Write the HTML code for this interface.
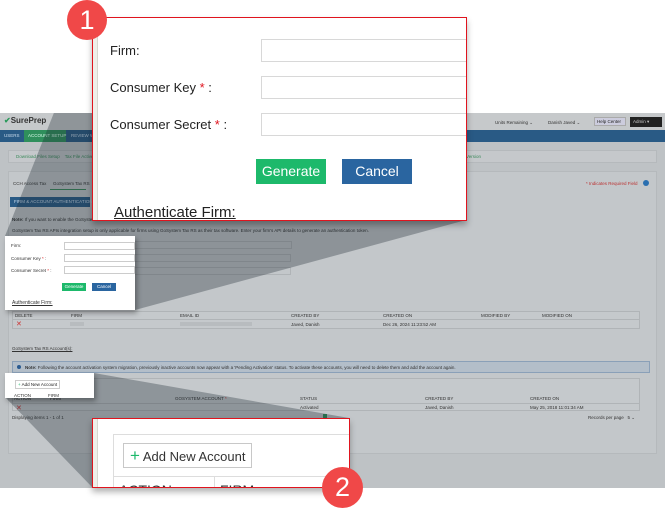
<!DOCTYPE html>
<html><head><meta charset="utf-8"><style>
*{margin:0;padding:0;box-sizing:border-box}
body{width:665px;height:509px;background:#fff;position:relative;overflow:hidden;font-family:"Liberation Sans",sans-serif;color:#222}
.a{position:absolute}
.t{position:absolute;font-size:4.5px;color:#333;white-space:nowrap}
.app{position:absolute;left:0;top:113px;width:665px;height:375px;background:#bec2c5;overflow:hidden}
.in{background:#fff;border:1px solid #ccc;position:absolute}
</style></head><body>
<div class="app">
 <div class="a" style="left:0;top:0;width:665px;height:17px;background:#c6c9cb"></div>
 <div class="a" style="left:4px;top:3px;font-size:8px;font-weight:bold;color:#333"><span style="color:#2a9a5a">✔</span>SurePrep</div>
 <div class="t" style="left:495px;top:7px">Units Remaining ⌄</div>
 <div class="t" style="left:548px;top:7px">Danish Javed ⌄</div>
 <div class="a" style="left:594px;top:4px;width:32px;height:9px;border:1px solid #aaa;background:#ccd;font-size:4.5px;padding:1px 2px">Help Center</div>
 <div class="a" style="left:630px;top:4px;width:32px;height:10px;background:#222;color:#ccc;font-size:4.5px;padding:2px 3px">Admin ▾</div>
 <div class="a" style="left:0;top:17px;width:665px;height:12px;background:#295a85"></div>
 <div class="a" style="left:24px;top:17px;width:42px;height:12px;background:#2f8f5c"></div>
 <div class="t" style="left:4px;top:20px;color:#cde">USERS</div>
 <div class="t" style="left:28px;top:20px;color:#dfe">ACCOUNT SETUP</div>
 <div class="t" style="left:71px;top:20px;color:#cde">REVIEW W</div>
 <div class="a" style="left:8px;top:37px;width:649px;height:13px;background:#c5c8cb;border:1px solid #b5b9bc"></div>
 <div class="t" style="left:16px;top:41px;color:#3a8a5a">Download Files Setup &nbsp;&nbsp; Tax File Active</div>
 <div class="t" style="left:466px;top:41px;color:#3a8a5a">Version</div>
 <div class="a" style="left:8px;top:58px;width:649px;height:283px;background:#c3c7ca;border:1px solid #b5b9bc"></div>
 <div class="t" style="left:13px;top:68px">CCH Access Tax</div>
 <div class="t" style="left:53px;top:68px">GoSystem Tax RS</div>
 <div class="a" style="left:50px;top:76px;width:36px;height:1px;background:#3a8a5a"></div>
 <div class="t" style="left:586px;top:68px;color:#b33">* Indicates Required Field</div>
 <div class="a" style="left:643px;top:67px;width:6px;height:6px;border-radius:50%;background:#2a6fb0"></div>
 <div class="a" style="left:10px;top:84px;width:80px;height:10px;background:#295a85"></div>
 <div class="t" style="left:14px;top:86px;color:#cde">FIRM &amp; ACCOUNT AUTHENTICATION</div>
 <div class="t" style="left:12px;top:104px"><b>Note:</b> If you want to enable the GoSystem</div>
 <div class="t" style="left:12px;top:115px">GoSystem Tax RS APIs integration setup is only applicable for firms using GoSystem Tax RS as their tax software. Enter your firm's API details to generate an authentication token.</div>
 <div class="a" style="left:64px;top:128px;width:228px;height:8px;border:1px solid #b0b4b7"></div>
 <div class="a" style="left:64px;top:141px;width:227px;height:8px;border:1px solid #b0b4b7"></div>
 <div class="a" style="left:64px;top:154px;width:227px;height:8px;border:1px solid #b0b4b7"></div>
 <div class="a" style="left:12px;top:198px;width:628px;height:18px;border:1px solid #b0b4b7;background:#c5c9cc"></div>
 <div class="a" style="left:12px;top:206px;width:628px;height:1px;background:#b0b4b7"></div>
 <div class="t" style="left:15px;top:200px">DELETE</div><div class="t" style="left:71px;top:200px">FIRM</div><div class="t" style="left:180px;top:200px">EMAIL ID</div><div class="t" style="left:291px;top:200px">CREATED BY</div><div class="t" style="left:383px;top:200px">CREATED ON</div><div class="t" style="left:481px;top:200px">MODIFIED BY</div><div class="t" style="left:542px;top:200px">MODIFIED ON</div>
 <div class="t" style="left:16px;top:207px;color:#c33;font-size:7px">✕</div>
 <div class="a" style="left:70px;top:209px;width:14px;height:4px;background:#b8bcbf"></div>
 <div class="a" style="left:180px;top:209px;width:72px;height:4px;background:#b8bcbf"></div>
 <div class="t" style="left:291px;top:209px">Javed, Danish</div><div class="t" style="left:383px;top:209px">Dec 26, 2024 11:23:52 AM</div>
 <div class="t" style="left:12px;top:233px;text-decoration:underline">GoSystem Tax RS Account(s):</div>
 <div class="a" style="left:12px;top:248px;width:638px;height:12px;background:#b3bec9;border:1px solid #8aa0b8"></div>
 <div class="a" style="left:17px;top:252px;width:4px;height:4px;border-radius:50%;background:#2a5a90"></div>
 <div class="t" style="left:25px;top:252px"><b>Note:</b> Following the account activation system migration, previously inactive accounts now appear with a 'Pending Activation' status. To activate these accounts, you will need to delete them and add the account again.</div>
 <div class="a" style="left:12px;top:265px;width:628px;height:33px;border:1px solid #b0b4b7;background:#c5c9cc"></div>
 <div class="a" style="left:12px;top:290px;width:628px;height:1px;background:#b0b4b7"></div>
 <div class="t" style="left:14px;top:283px">ACTION</div><div class="t" style="left:50px;top:283px">FIRM</div>
 <div class="t" style="left:175px;top:283px">GOSYSTEM ACCOUNT <span style="color:#c33">*</span></div><div class="t" style="left:300px;top:283px">STATUS</div><div class="t" style="left:425px;top:283px">CREATED BY</div><div class="t" style="left:530px;top:283px">CREATED ON</div>
 <div class="t" style="left:16px;top:291px;color:#c33;font-size:7px">✕</div>
 <div class="t" style="left:300px;top:292px">Activated</div><div class="t" style="left:425px;top:292px">Javed, Danish</div><div class="t" style="left:530px;top:292px">May 25, 2018 11:01:34 AM</div>
 <div class="t" style="left:12px;top:302px">Displaying items 1 - 1 of 1</div>
 <div class="t" style="left:588px;top:302px">Records per page &nbsp; 5 ⌄</div>
 <div class="a" style="left:323px;top:301px;width:4px;height:5px;background:#2f8f5c"></div>
 <svg class="a" style="left:0;top:0" width="665" height="375" viewBox="0 113 665 375">
  <polygon points="5,236 92,17 466,17 466,220 135,310 5,310" fill="#1e2a33" opacity="0.33"/>
  <polygon points="5,373 94,373 349,418 349,487 92,487 5,397" fill="#1e2a33" opacity="0.33"/>
 </svg>
</div>
<div class="a" style="left:5px;top:236px;width:130px;height:74px;background:#fff;box-shadow:2px 3px 5px rgba(0,0,0,.35)">
 <div class="t" style="left:6px;top:7px">Firm:</div>
 <div class="t" style="left:6px;top:20px">Consumer Key <span style="color:#d22">*</span> :</div>
 <div class="t" style="left:6px;top:32px">Consumer Secret <span style="color:#d22">*</span> :</div>
 <div class="in" style="left:59px;top:6px;width:71px;height:8px"></div>
 <div class="in" style="left:59px;top:18px;width:71px;height:8px"></div>
 <div class="in" style="left:59px;top:30px;width:71px;height:8px"></div>
 <div class="a" style="left:57px;top:47px;width:24px;height:8px;background:#1db96b;color:#fff;font-size:4.5px;text-align:center;line-height:8px">Generate</div>
 <div class="a" style="left:87px;top:47px;width:24px;height:8px;background:#2a65a0;color:#fff;font-size:4.5px;text-align:center;line-height:8px">Cancel</div>
 <div class="t" style="left:7px;top:64px;font-size:5px;text-decoration:underline">Authenticate Firm:</div>
</div>
<div class="a" style="left:5px;top:373px;width:89px;height:25px;background:#fff;box-shadow:2px 3px 5px rgba(0,0,0,.35)">
 <div class="a" style="left:10px;top:7px;width:45px;height:9px;border:1px solid #ccc;font-size:4.5px;padding:1px 2px;white-space:nowrap"><span style="color:#1db96b">+</span> Add New Account</div>
 <div class="t" style="left:9px;top:20px">ACTION</div><div class="t" style="left:43px;top:20px">FIRM</div>
</div>
<div class="a" style="left:92px;top:17px;width:375px;height:204px;background:#fff;border:1px solid #e0141e;overflow:hidden;box-shadow:0 4px 6px rgba(0,0,0,.3)">
 <div class="a" style="left:0;top:0;width:5px;height:204px;background:#efefe9;border-right:1px solid #d8d8d0"></div>
 <div class="a" style="left:17px;top:25px;font-size:13px">Firm:</div>
 <div class="a" style="left:17px;top:62px;font-size:13px">Consumer Key <span style="color:#e0141e">*</span> :</div>
 <div class="a" style="left:17px;top:99px;font-size:13px">Consumer Secret <span style="color:#e0141e">*</span> :</div>
 <div class="in" style="left:168px;top:21px;width:220px;height:23px;border-color:#d8d8d8"></div>
 <div class="in" style="left:168px;top:58px;width:220px;height:23px;border-color:#d8d8d8"></div>
 <div class="in" style="left:168px;top:95px;width:220px;height:23px;border-color:#d8d8d8"></div>
 <div class="a" style="left:163px;top:141px;width:70px;height:25px;background:#1db96b;color:#fff;font-size:14px;text-align:center;line-height:25px">Generate</div>
 <div class="a" style="left:249px;top:141px;width:70px;height:25px;background:#2a65a0;color:#fff;font-size:14px;text-align:center;line-height:25px">Cancel</div>
 <div class="a" style="left:21px;top:186px;font-size:15px;text-decoration:underline">Authenticate Firm:</div>
</div>
<div class="a" style="left:67px;top:0;width:40px;height:40px;border-radius:50%;background:#f04848;color:#fff;font-size:27px;text-align:center;line-height:40px">1</div>
<div class="a" style="left:92px;top:418px;width:258px;height:70px;background:#fff;border:1px solid #e0141e;overflow:hidden;box-shadow:0 4px 6px rgba(0,0,0,.3)">
 <div class="a" style="left:0;top:0;width:5px;height:70px;background:#efefe9;border-right:1px solid #d8d8d0"></div>
 <div class="a" style="left:20px;top:15px;width:240px;height:60px;border:1px solid #ddd"></div>
 <div class="a" style="left:20px;top:57px;width:240px;height:1px;background:#ddd"></div>
 <div class="a" style="left:121px;top:57px;width:1px;height:20px;background:#ddd"></div>
 <div class="a" style="left:30px;top:24px;width:129px;height:25px;border:1px solid #c8c8c8;font-size:13px;line-height:23px;padding-left:6px;color:#333;white-space:nowrap"><span style="color:#1db96b;font-size:17px">+</span> Add New Account</div>
 <div class="a" style="left:26px;top:63px;font-size:14px;color:#333">ACTION</div>
 <div class="a" style="left:127px;top:63px;font-size:14px;color:#333">FIRM</div>
</div>
<div class="a" style="left:322px;top:467px;width:41px;height:41px;border-radius:50%;background:#f04848;color:#fff;font-size:27px;text-align:center;line-height:41px">2</div>
</body></html>
